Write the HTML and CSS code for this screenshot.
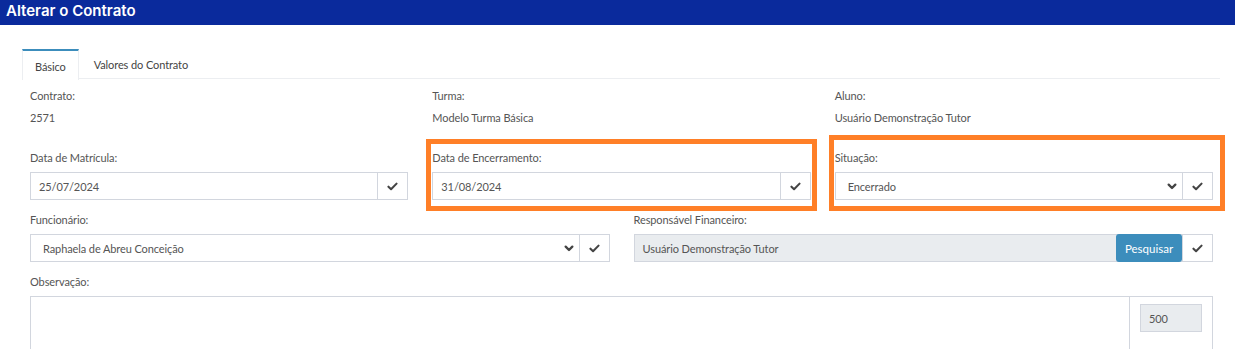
FILE: index.html
```html
<!DOCTYPE html>
<html lang="pt-BR">
<head>
<meta charset="utf-8">
<title>Alterar o Contrato</title>
<link rel="stylesheet" href="styles.css">
</head>
<body>
<header class="topbar"><h1 class="title">Alterar o Contrato</h1></header>
<main class="content">
  <nav class="tabs">
    <div class="tab active">Básico</div>
    <div class="tab">Valores do Contrato</div>
  </nav>
  <section class="grid3">
    <div class="col">
      <div class="label">Contrato:</div>
      <div class="value">2571</div>
    </div>
    <div class="col">
      <div class="label">Turma:</div>
      <div class="value">Modelo Turma Básica</div>
    </div>
    <div class="col">
      <div class="label">Aluno:</div>
      <div class="value">Usuário Demonstração Tutor</div>
    </div>
  </section>
  <section class="grid3 fields">
    <div class="col">
      <div class="label">Data de Matrícula:</div>
      <div class="group">
        <div class="input">25/07/2024</div>
        <div class="addon"><svg class="check" viewBox="0 0 12 10"><path d="M1.5 5.2 L4.4 8 L10.5 1.8" /></svg></div>
      </div>
    </div>
    <div class="col">
      <div class="label">Data de Encerramento:</div>
      <div class="group">
        <div class="input">31/08/2024</div>
        <div class="addon"><svg class="check" viewBox="0 0 12 10"><path d="M1.5 5.2 L4.4 8 L10.5 1.8" /></svg></div>
      </div>
    </div>
    <div class="col">
      <div class="label">Situação:</div>
      <div class="group">
        <div class="input select">Encerrado<svg class="chev" viewBox="0 0 12 8"><path d="M2 1.8 L6 5.8 L10 1.8" /></svg></div>
        <div class="addon"><svg class="check" viewBox="0 0 12 10"><path d="M1.5 5.2 L4.4 8 L10.5 1.8" /></svg></div>
      </div>
    </div>
  </section>
  <section class="grid2 fields">
    <div class="col">
      <div class="label">Funcionário:</div>
      <div class="group">
        <div class="input select">Raphaela de Abreu Conceição<svg class="chev" viewBox="0 0 12 8"><path d="M2 1.8 L6 5.8 L10 1.8" /></svg></div>
        <div class="addon"><svg class="check" viewBox="0 0 12 10"><path d="M1.5 5.2 L4.4 8 L10.5 1.8" /></svg></div>
      </div>
    </div>
    <div class="col">
      <div class="label">Responsável Financeiro:</div>
      <div class="group">
        <div class="input readonly">Usuário Demonstração Tutor</div>
        <button class="btn-search">Pesquisar</button>
        <div class="addon"><svg class="check" viewBox="0 0 12 10"><path d="M1.5 5.2 L4.4 8 L10.5 1.8" /></svg></div>
      </div>
    </div>
  </section>
  <section class="fields obs">
    <div class="label">Observação:</div>
    <div class="textarea-group">
      <div class="textarea"></div>
      <div class="counter-cell"><div class="counter">500</div></div>
    </div>
  </section>
</main>
<div class="highlight hl-1"></div>
<div class="highlight hl-2"></div>
</body>
</html>
```

FILE: styles.css
```css
* { box-sizing: border-box; }
html, body { margin: 0; padding: 0; background: #fff; overflow: hidden; }
body {
  font-family: "Lato", "Liberation Sans", sans-serif;
  font-size: 11px;
  letter-spacing: -0.1px;
  color: #555;
  width: 1235px;
  height: 349px;
  position: relative;
}
.topbar {
  height: 25px;
  background: #0a2a9c;
  display: flex;
  align-items: center;
  padding-left: 6px;
}
.title {
  margin: 0;
  font-family: "Inter", "Liberation Sans", sans-serif;
  font-weight: 600;
  font-size: 15px;
  color: #fff;
  letter-spacing: 0;
  line-height: 1;
  margin-top: -4px;
}
.content {
  padding: 24px 10px 0 18px;
}
.tabs {
  display: flex;
  margin-left: 4px;
  margin-right: 5px;
  border-bottom: 1px solid #eceef1;
  height: 30px;
}
.tab {
  padding: 0 15px;
  display: flex;
  align-items: center;
  color: #444;
  font-size: 11px;
  padding-top: 2px;
}
.tab.active {
  border-top: 2px solid #3c8dbc;
  border-left: 1px solid #eceef1;
  border-right: 1px solid #eceef1;
  margin-bottom: -1px;
  background: #fff;
  padding: 0 12px;
  padding-top: 2px;
  height: 31px;
}
.grid3 { display: grid; grid-template-columns: repeat(3, 1fr); }
.grid2 { display: grid; grid-template-columns: repeat(2, 1fr); }
.col { padding: 0 12px; }
.label { font-size: 11px; color: #555; line-height: 14px; }
.value { font-size: 11px; color: #555; margin-top: 8px; line-height: 14px; }
.grid3:first-of-type { padding-top: 10px; }
.fields { margin-top: 25px; }
.grid3.fields { margin-top: 26px; }
.grid2.fields { margin-top: 13px; }
.fields .label { margin-bottom: 7px; }
.group {
  display: flex;
  height: 28px;
  border: 1px solid #d2d6de;
}
.input {
  flex: 1;
  display: flex;
  align-items: center;
  padding: 0 8px;
  font-size: 11px;
  color: #555;
  min-width: 0;
}
.input.select { padding-left: 12px; padding-right: 5px; justify-content: space-between; }
.input.readonly { background: #e9ecef; }
.addon {
  width: 30px;
  border-left: 1px solid #d2d6de;
  display: flex;
  align-items: center;
  justify-content: center;
}
.check { width: 11px; height: 9px; }
.check path, .chev path {
  fill: none;
  stroke: #444;
  stroke-width: 2.3;
  stroke-linecap: round;
  stroke-linejoin: round;
}
.chev { width: 10px; height: 7px; }
.chev path { stroke-width: 2.8; }
.btn-search {
  margin: -1px 0;
  width: 66px;
  border: none;
  background: #3c8dbc;
  color: #fff;
  font-family: "Lato", "Liberation Sans", sans-serif;
  font-size: 11.5px;
  border-radius: 3px;
  padding: 0;
}
.obs { margin-top: 13px; padding: 0 12px; }
.textarea-group {
  display: flex;
  height: 60px;
  border: 1px solid #d2d6de;
  border-bottom: none;
}
.textarea { flex: 1; }
.counter-cell {
  width: 83px;
  border-left: 1px solid #d2d6de;
  padding: 7px 10px 0 10px;
}
.counter {
  height: 28px;
  background: #e9ecef;
  border: 1px solid #d2d6de;
  display: flex;
  align-items: center;
  padding-left: 8px;
  font-size: 11px;
}
.highlight {
  position: absolute;
  border: 5px solid #ff7f27;
  pointer-events: none;
}
.hl-1 { left: 426px; top: 139px; width: 391px; height: 72px; }
.hl-2 { left: 829px; top: 135px; width: 396px; height: 76px; }
```
